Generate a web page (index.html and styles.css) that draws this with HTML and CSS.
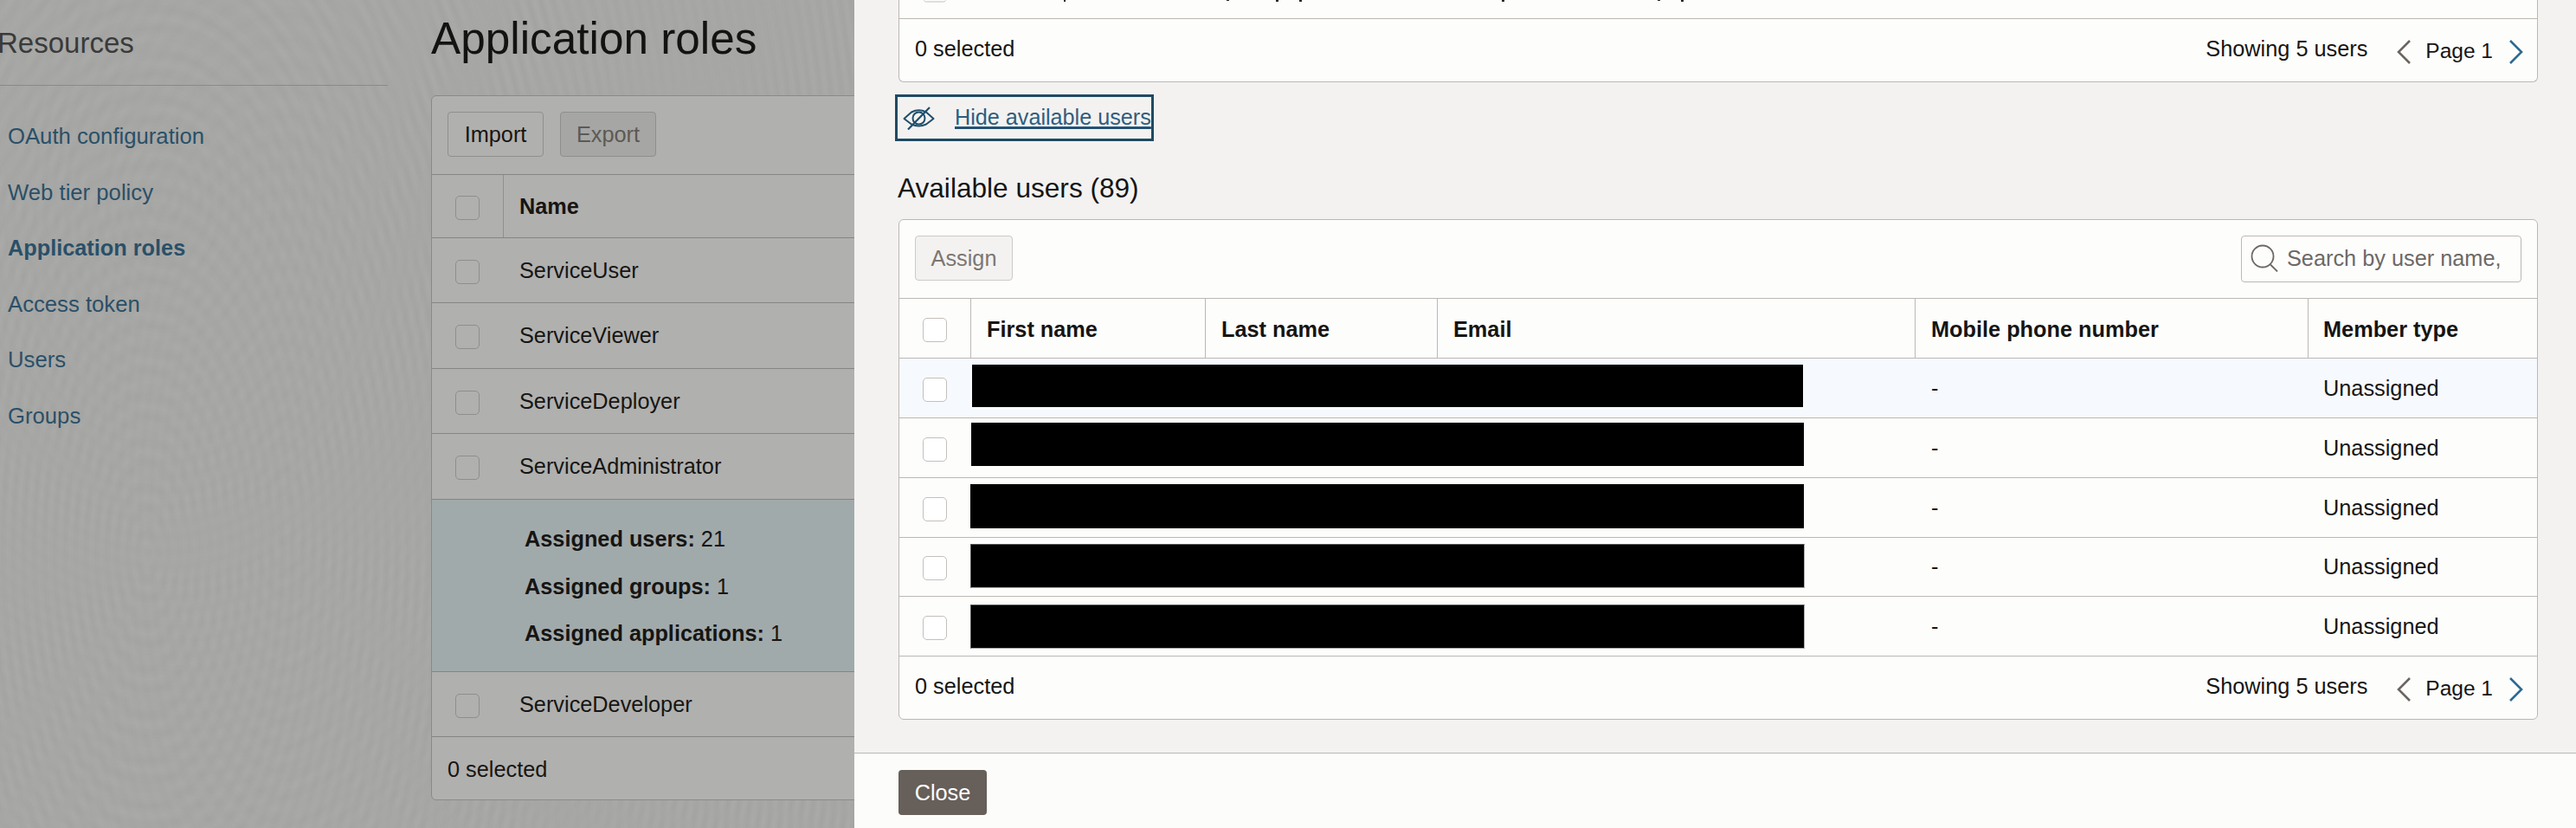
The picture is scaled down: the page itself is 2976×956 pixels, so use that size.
FILE: index.html
```html
<!DOCTYPE html>
<html lang="en">
<head>
  <meta charset="UTF-8" />
  <title>Application roles</title>
  <link rel="stylesheet" href="styles.css">
</head>
<body>

  <div class="page">
    <div class="sidebar">
      <h2 class="side-title">Resources</h2>
      <div class="side-nav">
        <a href="#">OAuth configuration</a>
        <a href="#">Web tier policy</a>
        <a href="#" class="active">Application roles</a>
        <a href="#">Access token</a>
        <a href="#">Users</a>
        <a href="#">Groups</a>
      </div>
    </div>

    <div class="main">
      <h1>Application roles</h1>
      <div class="roles">
        <div class="roles-toolbar">
          <button class="dim-btn">Import</button>
          <button class="dim-btn off">Export</button>
        </div>
        <div class="role-row role-head">
          <div class="check-col"><span class="dim-check"></span></div>
          <div class="role-name"><b>Name</b></div>
        </div>
        <div class="role-row">
          <div class="check-col"><span class="dim-check"></span></div>
          <div class="role-name">ServiceUser</div>
        </div>
        <div class="role-row tall">
          <div class="check-col"><span class="dim-check"></span></div>
          <div class="role-name">ServiceViewer</div>
        </div>
        <div class="role-row">
          <div class="check-col"><span class="dim-check"></span></div>
          <div class="role-name">ServiceDeployer</div>
        </div>
        <div class="role-row tall">
          <div class="check-col"><span class="dim-check"></span></div>
          <div class="role-name">ServiceAdministrator</div>
        </div>
        <div class="role-detail">
          <p><b>Assigned users:</b> 21</p>
          <p><b>Assigned groups:</b> 1</p>
          <p><b>Assigned applications:</b> 1</p>
        </div>
        <div class="role-row">
          <div class="check-col"><span class="dim-check"></span></div>
          <div class="role-name">ServiceDeveloper</div>
        </div>
        <div class="roles-foot">0 selected</div>
      </div>
    </div>
  </div>

  <div class="drawer">
    <div class="drawer-body">

      <div class="panel panel-cut">
        <svg class="cut-row" width="1892" height="21" viewBox="0 0 1892 21">
          <path d="M28.5 0.5c0.5 1.2 1.5 1.5 3 1.5h19c1.5 0 2.5-0.3 3-1.5" fill="none" stroke="#c4bfbb" />
          <g fill="#2a2826">
            <rect x="190" y="0" width="2" height="2" />
            <rect x="378" y="0" width="3" height="1" />
            <rect x="435" y="0" width="3" height="2" />
            <rect x="462" y="0" width="3" height="2" />
            <rect x="696" y="0" width="3" height="2" />
            <rect x="876" y="0" width="3" height="1" />
            <rect x="903" y="0" width="3" height="2" />
          </g>
        </svg>
        <div class="panel-foot">
          <span>0 selected</span>
          <div class="pager">
            <span class="showing">Showing 5 users</span>
            <svg class="chev" width="18" height="28" viewBox="0 0 18 28"><path d="M16 1 3 14l13 13" fill="none" stroke="#6b6560" stroke-width="2.6" /></svg>
            <span class="page-no">Page 1</span>
            <svg class="chev" width="18" height="28" viewBox="0 0 18 28"><path d="M2 1l13 13L2 27" fill="none" stroke="#2c6a92" stroke-width="2.6" /></svg>
          </div>
        </div>
      </div>

      <a href="#" class="toggle-link">
        <svg width="37" height="27" viewBox="0 0 37 27">
          <path d="M1.5 14 10 6.5Q18.5 2 27 6.5L35.5 14 27 20.5Q18.5 24.5 10 20.5Z" fill="none" stroke="#1f4e6c" stroke-width="2" stroke-linejoin="round" />
          <circle cx="18.5" cy="13.5" r="7" fill="none" stroke="#1f4e6c" stroke-width="2" />
          <path d="M6 26.5 31 1" stroke="#1f4e6c" stroke-width="2.2" />
        </svg>
        <span>Hide available users</span>
      </a>

      <h3 class="section-title">Available users (89)</h3>

      <div class="panel">
        <div class="panel-tools">
          <button class="assign-btn">Assign</button>
          <div class="search">
            <svg width="32" height="32" viewBox="0 0 32 32">
              <circle cx="14" cy="14" r="12.5" fill="none" stroke="#6e6864" stroke-width="1.8" />
              <path d="M23 23.5 31 31.5" stroke="#6e6864" stroke-width="1.8" />
            </svg>
            <span>Search by user name,</span>
          </div>
        </div>

        <div class="user-row user-head">
          <div class="cell center"><span class="check"></span></div>
          <div class="cell">First name</div>
          <div class="cell">Last name</div>
          <div class="cell">Email</div>
          <div class="cell">Mobile phone number</div>
          <div class="cell">Member type</div>
        </div>

        <div class="user-row hover">
          <div class="cell center"><span class="check"></span></div>
          <div class="redact redact-1"></div>
          <div class="cell">-</div>
          <div class="cell">Unassigned</div>
        </div>
        <div class="user-row">
          <div class="cell center"><span class="check"></span></div>
          <div class="redact redact-2"></div>
          <div class="cell">-</div>
          <div class="cell">Unassigned</div>
        </div>
        <div class="user-row">
          <div class="cell center"><span class="check"></span></div>
          <div class="redact redact-3"></div>
          <div class="cell">-</div>
          <div class="cell">Unassigned</div>
        </div>
        <div class="user-row short">
          <div class="cell center"><span class="check"></span></div>
          <div class="redact redact-4"></div>
          <div class="cell">-</div>
          <div class="cell">Unassigned</div>
        </div>
        <div class="user-row">
          <div class="cell center"><span class="check"></span></div>
          <div class="redact redact-5"></div>
          <div class="cell">-</div>
          <div class="cell">Unassigned</div>
        </div>

        <div class="panel-foot">
          <span>0 selected</span>
          <div class="pager">
            <span class="showing">Showing 5 users</span>
            <svg class="chev" width="18" height="28" viewBox="0 0 18 28"><path d="M16 1 3 14l13 13" fill="none" stroke="#6b6560" stroke-width="2.6" /></svg>
            <span class="page-no">Page 1</span>
            <svg class="chev" width="18" height="28" viewBox="0 0 18 28"><path d="M2 1l13 13L2 27" fill="none" stroke="#2c6a92" stroke-width="2.6" /></svg>
          </div>
        </div>
      </div>
    </div>

    <div class="drawer-foot">
      <button class="close-btn">Close</button>
    </div>
  </div>

</body>
</html>
```

FILE: styles.css
```css
* {
  box-sizing: border-box;
}

html, body {
  height: 956px;
  overflow: hidden;
}

body {
  margin: 0;
  display: flex;
  font-family: "Liberation Sans", Arial, sans-serif;
  font-size: 25.3px;
  color: #161513;
  background: #f3f2f1;
}

button {
  font: inherit;
  padding: 0;
}

/* dimmed page behind the drawer */
.page {
  width: 987px;
  flex: none;
  height: 956px;
  display: flex;
  overflow: hidden;
  background-color: #a8a8a6;
  background-image:
    repeating-radial-gradient(ellipse 100px 220px at 170px 640px, rgba(0, 0, 0, 0.018), rgba(0, 0, 0, 0) 6px, rgba(0, 0, 0, 0.018) 12px),
    repeating-radial-gradient(ellipse 70px 170px at 330px 600px, rgba(0, 0, 0, 0.012), rgba(0, 0, 0, 0) 6px, rgba(0, 0, 0, 0.012) 12px),
    repeating-radial-gradient(ellipse 90px 130px at 190px 230px, rgba(255, 255, 255, 0.02), rgba(255, 255, 255, 0) 6px, rgba(255, 255, 255, 0.02) 12px);
}

.sidebar {
  width: 448px;
  flex: none;
}

.side-title {
  margin: 0 0 0 -3px;
  height: 99px;
  padding-top: 31px;
  font-size: 33px;
  line-height: 38px;
  font-weight: normal;
  color: #3a3a39;
  border-bottom: 1px solid #8a8a88;
}

.side-nav {
  padding-top: 26px;
}

.side-nav a {
  display: block;
  padding-left: 9px;
  font-size: 25.7px;
  line-height: 64.6px;
  color: #2a5068;
  text-decoration: none;
}

.side-nav a.active {
  font-size: 25.3px;
  font-weight: bold;
}

.main {
  margin-left: 50px;
  width: 900px;
  flex: none;
}

h1 {
  margin: 0;
  height: 110px;
  padding-top: 15px;
  font-size: 51.3px;
  line-height: 60px;
  font-weight: normal;
  color: #131312;
}

.roles {
  border: 1px solid #8a8a88;
  border-radius: 6px;
  background: #b0b0ae;
}

.roles-toolbar {
  height: 91px;
  padding: 18px;
  display: flex;
  gap: 19px;
  border-bottom: 1px solid #858583;
}

.dim-btn {
  width: 111px;
  height: 52px;
  color: #161513;
  background: #b0b0ae;
  border: 1px solid #8f8f8d;
  border-radius: 4px;
}

.dim-btn.off {
  color: #5b5956;
  background: #a6a6a4;
}

.role-row {
  height: 75px;
  display: flex;
  align-items: center;
  border-bottom: 1px solid #858583;
}

.role-row.tall {
  height: 76px;
}

.role-head {
  height: 73px;
}

.check-col {
  width: 83px;
  height: 100%;
  flex: none;
  display: flex;
  align-items: center;
  padding: 3px 0 0 27px;
}

.role-head .check-col {
  border-right: 1px solid #8f8f8d;
}

.dim-check {
  width: 28px;
  height: 28px;
  border: 1px solid #8e8e8c;
  border-radius: 5px;
}

.role-name {
  padding-left: 18px;
}

.role-detail {
  height: 199px;
  padding: 18px 0 0 107px;
  background: #a1aaab;
  border-bottom: 1px solid #858583;
}

.role-detail p {
  margin: 0;
  line-height: 54.5px;
}

.roles-foot {
  height: 72px;
  padding: 18px;
  line-height: 38px;
}

/* drawer */
.drawer {
  flex: 1;
  height: 956px;
  display: flex;
  flex-direction: column;
}

.drawer-body {
  height: 869px;
  flex: none;
  padding: 0 44px 0 51px;
}

.panel {
  border: 1px solid #bcb8b4;
  border-radius: 6px;
  background: #fdfdfc;
}

.panel-cut {
  border-top: 0;
  border-radius: 0 0 6px 6px;
}

.cut-row {
  display: block;
  border-bottom: 1px solid #bcb8b4;
  height: 22px;
  width: 100%;
}

.panel-foot {
  height: 72px;
  padding: 19px 15px 0 18px;
  display: flex;
  justify-content: space-between;
  align-items: flex-start;
  line-height: 30px;
}

.pager {
  display: flex;
  align-items: flex-start;
}

.chev {
  margin-top: 5px;
}

.showing {
  margin-right: 33px;
}

.page-no {
  margin: 3px 18px 0 16px;
  font-size: 24.5px;
}

.toggle-link {
  margin: 14px 0 0 -4px;
  width: 299px;
  height: 54px;
  padding: 9px 0 0 6px;
  display: flex;
  align-items: flex-start;
  gap: 23px;
  border: 3px solid #1f4a63;
  color: #2f5d7e;
}

.toggle-link svg {
  margin-top: 2px;
}

.toggle-link span {
  line-height: 28px;
  white-space: nowrap;
  font-size: 25.2px;
  text-decoration: underline;
  text-decoration-color: #1f4e6c;
  text-decoration-thickness: 2px;
  text-underline-offset: 3px;
}

.section-title {
  margin: 34px 0 16px -1px;
  font-size: 31.6px;
  line-height: 40px;
  font-weight: normal;
}

.panel-tools {
  height: 91px;
  padding: 18px 18px 0 18px;
  display: flex;
  justify-content: space-between;
  align-items: flex-start;
  border-bottom: 1px solid #bcb8b4;
}

.assign-btn {
  width: 113px;
  height: 52px;
  color: #7d7670;
  background: #f3f2f1;
  border: 1px solid #cdcac6;
  border-radius: 4px;
}

.search {
  width: 324px;
  height: 54px;
  padding: 0 0 2px 10px;
  display: flex;
  align-items: center;
  gap: 10px;
  color: #6e6864;
  border: 1px solid #bcb8b4;
  border-radius: 4px;
  white-space: nowrap;
  overflow: hidden;
}

.user-row {
  height: 69px;
  display: grid;
  grid-template-columns: 83px 271px 268px 552px 454px 1fr;
  border-bottom: 1px solid #bcb8b4;
}

.user-row.short {
  height: 68px;
}

.user-row.hover {
  background: #f6f9fd;
}

.user-head {
  font-weight: bold;
}

.cell {
  display: flex;
  align-items: center;
  padding-left: 18px;
}

.cell:last-child {
  padding-left: 17px;
}

.user-head .cell {
  padding-top: 2px;
}

.cell.center {
  padding: 3px 0 0 27px;
}

.user-head .cell:not(:last-child) {
  border-right: 1px solid #bcb8b4;
}

.check {
  width: 28px;
  height: 28px;
  background: #fff;
  border: 1px solid #c4bfbb;
  border-radius: 5px;
}

.redact {
  grid-column: 2 / 5;
  align-self: start;
  background: #000;
}

.redact-1 { margin: 7px 0 0 1px; width: 960px; height: 49px; }
.redact-2 { margin: 5px 0 0 0; width: 962px; height: 50px; }
.redact-3 { margin: 7px 0 0 -1px; width: 963px; height: 51px; }
.redact-4 { margin: 7px 0 0 -1px; width: 964px; height: 51px; border: 1px solid #555; border-right-color: #aaa; border-bottom-color: #aaa; }
.redact-5 { margin: 9px 0 0 -1px; width: 964px; height: 51px; border: 1px solid #555; border-right-color: #aaa; border-bottom-color: #aaa; }

.drawer-foot {
  flex: 1;
  padding: 19px 0 0 51px;
  background: #fcfcfb;
  border-top: 1px solid #bcb8b4;
}

.close-btn {
  width: 102px;
  height: 52px;
  color: #fff;
  background: #665f5a;
  border: 0;
  border-radius: 4px;
}
```
